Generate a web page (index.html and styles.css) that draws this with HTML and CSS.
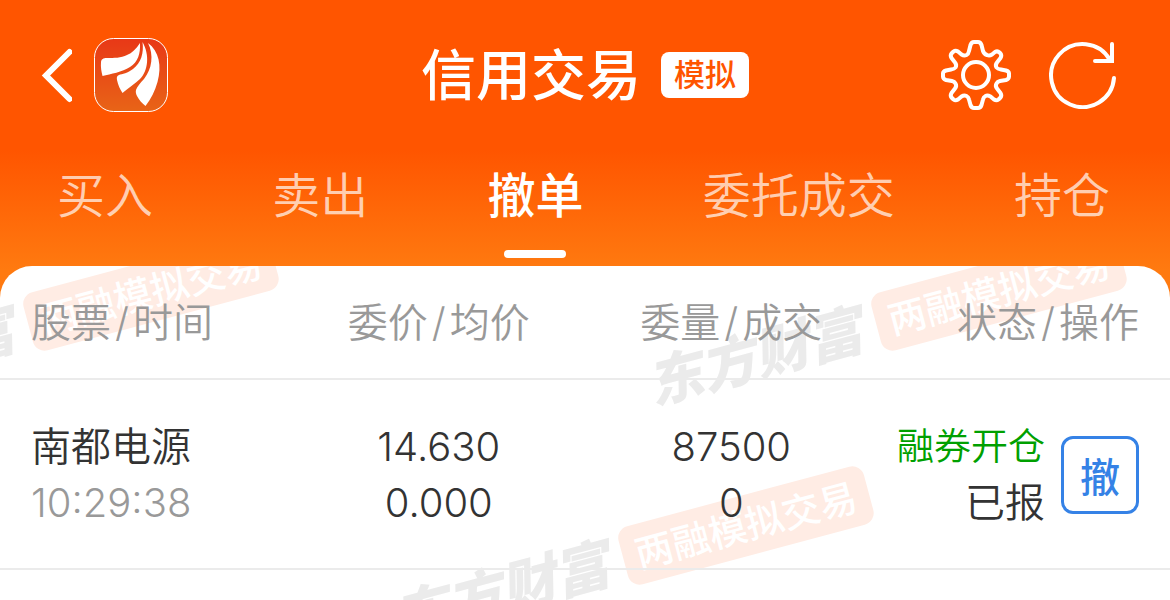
FILE: index.html
```
<!DOCTYPE html>
<html lang="zh-CN">
    <head>
        <meta charset="UTF-8">
        <meta name="viewport" content="width=device-width, initial-scale=1.0">
        <title>信用交易</title>
        <link rel="stylesheet" href="styles.css">
    </head>
    <body>
        <header class="top">
            <div class="navbar">
                <div class="nav-left">
                    <button class="icon-button" type="button" aria-label="返回">
                        <svg width="32" height="56" viewBox="0 0 32 56" fill="none" stroke="#fff" stroke-width="6" stroke-linecap="round" stroke-linejoin="miter">
                            <path d="M29.500 5L6 28.500L29.500 52"/>
                        </svg>
                    </button>
                    <a class="logo" href="#" aria-label="首页">
                        <svg width="74" height="74" viewBox="0 0 74 74">
                            <defs>
                                <linearGradient id="logo-bg" x1="0" y1="0" x2="0" y2="1">
                                    <stop offset="0" stop-color="#e83817"/>
                                    <stop offset="1" stop-color="#e86417"/>
                                </linearGradient>
                            </defs>
                            <rect x=".5" y=".5" width="73" height="73" rx="19" fill="url(#logo-bg)" stroke="#fff"/>
                            <g fill="#fff">
                                <path d="M46 5C42 11 38 15 33 17C27 20 20 20 13 20C9 20 7.500 21 7 24C6.500 29 7.500 34 8.500 38C17 36 28 34 36 29C44 24 46.500 16 46 5Z"/>
                                <path d="M48.500 4C50 15 47 25 39 31C34 35 28 36 25 37C23 38 22.500 39 23 42C24 47 26 51 28.500 55C34 50 41 46 46 41C54 33 56 17 48.500 4Z"/>
                                <path d="M54 5C60 17 58 31 50 41C46 45 43 49 42 52C41.500 54 42 56 43 58C45 62 48 65 51.500 68C57 61 61 53 63.500 44C68 28 65 13 54 5Z"/>
                            </g>
                        </svg>
                    </a>
                </div>
                <div class="nav-title">
                    <h1>信用交易</h1>
                    <span class="badge">模拟</span>
                </div>
                <div class="nav-right">
                    <button class="icon-button" type="button" aria-label="设置">
                        <svg width="72" height="72" viewBox="0 0 72 72" fill="none" stroke="#fff" stroke-width="4" stroke-linejoin="round">
                            <circle cx="36" cy="36" r="13"/>
                            <path d="M30.500 6Q31.500 3 34 3H38Q40.500 3 41.500 6L43 12Q44 15 47 16Q49.500 17 52 15.500L55 13Q57.500 11.500 59.500 13.500L60.500 14.500Q62 16.500 60.500 19L57 23.500Q55 26 56.500 28.500Q57.500 30 61 30.500L66 31.500Q69 32.500 69 34.500V37.500Q69 40 66 41L60 42Q57.500 42.500 56.500 44.500Q55 47 57 49.500L60.500 54Q62 56.500 60.500 58.500L58.500 60.500Q56.500 62 54 60.500L50.500 57.500Q47.500 56 45.500 57Q43.500 58 43 60.500L41.500 66Q40.500 69 38 69H34Q31.500 69 30.500 66L29 60.500Q28.500 58 26.500 57Q24 56 21.500 57.500L18 60.500Q15.500 62 13.500 60.500L11.500 58.500Q10 56.500 11.500 54L15 49.500Q17 47 15.500 44.500Q14.500 42.500 12 42L6 41Q3 40 3 37.500V34.500Q3 32.500 6 31.500L11 30.500Q14.500 30 15.500 28.500Q17 26 15 23.500L11.500 19Q10 16.500 11.500 14.500L13.500 12.500Q15.500 11 18 12.500L21.500 15.500Q24 17 26.500 16Q28.500 15 29 12Z"/>
                        </svg>
                    </button>
                    <button class="icon-button" type="button" aria-label="刷新">
                        <svg width="68" height="68" viewBox="0 0 68 68" fill="none" stroke="#fff" stroke-width="4" stroke-linecap="round">
                            <path d="M65 37A31.500 31.500 0 1 1 61 19"/>
                            <path d="M63 3V20H46"/>
                        </svg>
                    </button>
                </div>
            </div>
            <nav class="tabs">
                <a class="tab" href="#">买入</a>
                <a class="tab" href="#">卖出</a>
                <a class="tab active" href="#" aria-current="page">撤单</a>
                <a class="tab" href="#">委托成交</a>
                <a class="tab" href="#">持仓</a>
            </nav>
        </header>

        <main class="panel">
            <div class="watermarks" aria-hidden="true">
                <div class="watermark mark-left"><span class="brand">东方财富</span><span class="tag">两融模拟交易</span></div>
                <div class="watermark mark-right"><span class="brand">东方财富</span><span class="tag">两融模拟交易</span></div>
                <div class="watermark mark-middle"><span class="brand">东方财富</span><span class="tag">两融模拟交易</span></div>
            </div>

            <table class="orders">
                <thead>
                    <tr>
                        <th>股票<span class="slash">/</span>时间</th>
                        <th>委价<span class="slash">/</span>均价</th>
                        <th>委量<span class="slash">/</span>成交</th>
                        <th>状态<span class="slash">/</span>操作</th>
                    </tr>
                </thead>
                <tbody>
                    <tr>
                        <td>
                            <div>南都电源</div>
                            <div class="time">10:29:38</div>
                        </td>
                        <td>
                            <div>14.630</div>
                            <div>0.000</div>
                        </td>
                        <td>
                            <div>87500</div>
                            <div>0</div>
                        </td>
                        <td>
                            <div class="status">
                                <div>
                                    <div class="side">融券开仓</div>
                                    <div>已报</div>
                                </div>
                                <button class="cancel" type="button">撤</button>
                            </div>
                        </td>
                    </tr>
                </tbody>
            </table>
        </main>
    </body>
</html>
```

FILE: styles.css
```
* {
    box-sizing: border-box;
}
body {
    margin: 0;
    min-height: 100vh;
    display: flex;
    flex-direction: column;
    overflow: hidden;
    font-family: Inter, "Noto Sans CJK SC", sans-serif;
    color: #333;
    background: linear-gradient(#ff5500 0, #ff5500 150px, #ff7a10 270px);
}
button {
    font-family: inherit;
    padding: 0;
    cursor: pointer;
}
svg {
    display: block;
}

/* top bar */
.navbar {
    display: grid;
    grid-template-columns: 1fr auto 1fr;
    align-items: center;
    height: 150px;
    padding: 0 40px;
}
.nav-left,
.nav-right,
.nav-title {
    display: flex;
    align-items: center;
}
.nav-left {
    gap: 22px;
}
.nav-right {
    justify-content: flex-end;
    gap: 37px;
    padding-right: 13px;
}
.nav-title {
    gap: 20px;
    color: #fff;
}
.nav-title h1 {
    margin: 0;
    font-size: 55px;
    font-weight: 500;
    line-height: 80px;
}
.badge {
    padding: 0 13px;
    border-radius: 8px;
    background: #fff;
    color: #ff5500;
    font-size: 31px;
    font-weight: 500;
    line-height: 46px;
}
.icon-button {
    border: none;
    background: none;
}

/* tabs */
.tabs {
    display: flex;
    justify-content: space-between;
    height: 116px;
    padding: 0 60px 0 57px;
}
.tab {
    display: flex;
    flex-direction: column;
    align-items: center;
    color: rgba(255, 255, 255, .7);
    font-size: 48px;
    font-weight: 350;
    line-height: 92px;
    text-decoration: none;
}
.tab.active {
    color: #fff;
    font-weight: 500;
}
.tab.active::after {
    content: "";
    width: 62px;
    height: 8px;
    margin-top: 8px;
    border-radius: 4px;
    background: #fff;
}

/* order list */
.panel {
    position: relative;
    flex: 1;
    overflow: hidden;
    border-radius: 32px 32px 0 0;
    background: #fff;
}
.orders {
    position: relative;
    width: 100%;
    table-layout: fixed;
    border-collapse: collapse;
    font-size: 40px;
    line-height: 56px;
    text-align: center;
    white-space: nowrap;
}
.orders th,
.orders td {
    padding: 39px 0 37px;
    border-bottom: 2px solid #ebebeb;
    font-weight: 350;
}
.orders th {
    padding: 29px 0 27px;
    color: #999;
}
.orders th:first-child,
.orders td:first-child {
    padding-left: 31px;
    text-align: left;
}
.orders th:last-child,
.orders td:last-child {
    padding-right: 31px;
    text-align: right;
}
.slash {
    margin: 0 4px;
}
.time {
    color: #999;
    font-weight: 300;
}
.status {
    display: flex;
    align-items: center;
    justify-content: flex-end;
    gap: 16px;
}
.side {
    color: #00a000;
    font-size: 37px;
}
.cancel {
    width: 78px;
    height: 78px;
    border: 3px solid #3582e6;
    border-radius: 12px;
    background: #fff;
    color: #3582e6;
    font-size: 40px;
    font-weight: 500;
}

/* watermarks lie under the table, placed by their centre */
.watermarks {
    position: absolute;
    inset: 0;
}
.watermark {
    position: absolute;
    display: flex;
    align-items: center;
    gap: 16px;
    white-space: nowrap;
    transform: translate(-50%, -50%) rotate(-15deg);
}
.mark-left {
    left: 37px;
    top: 56px;
}
.mark-right {
    left: 885px;
    top: 56px;
}
.mark-middle {
    left: 632px;
    top: 290px;
}
.brand {
    color: #ebebeb;
    font-size: 55px;
    font-style: italic;
    font-weight: 900;
    line-height: 60px;
}
.tag {
    padding: 0 13px;
    border-radius: 12px;
    background: #ffece4;
    color: #fff;
    font-size: 38px;
    font-weight: 500;
    line-height: 60px;
}
```
